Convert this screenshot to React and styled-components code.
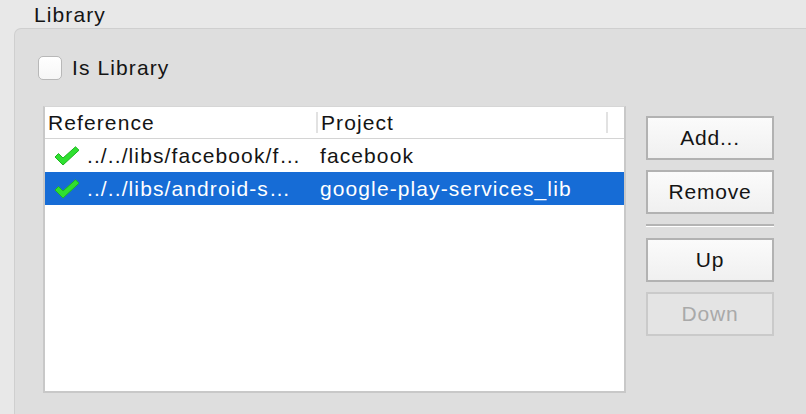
import React from "react";
import styled, { createGlobalStyle } from "styled-components";

const textDark = "#141414";
const selection = "#166cd6";
const sansFamily = `"Liberation Sans", Arial, sans-serif`;

const GlobalStyle = createGlobalStyle`
  html, body {
    margin: 0;
    padding: 0;
    background: #e8e8e8;
    font-family: ${sansFamily};
    overflow: hidden;
  }
`;

const rows = [
  { reference: "../../libs/facebook/f\u2026", project: "facebook" },
  { reference: "../../libs/android-s\u2026", project: "google-play-services_lib", selected: true }
];

const CheckMark = () => (
  <svg width="26" height="20" viewBox="0 0 26 20">
    <path
      d="M1 11 L4.5 7.5 L9 12 L21.5 0.8 L25 4.2 L9 19 Z"
      fill="#2fe030"
      stroke="#1fb522"
      strokeWidth="1"
      strokeLinejoin="round"
    />
  </svg>
);

export default function App() {
  return (
    <Page>
      <GlobalStyle />
      <Title>Library</Title>
      <GroupBox>
        <CheckboxRow>
          <Checkbox />
          <Label>Is Library</Label>
        </CheckboxRow>

        <Content>
          <Table>
            <HeaderRow>
              <HeaderCell width={268}>Reference</HeaderCell>
              <HeaderCell width={285}>Project</HeaderCell>
            </HeaderRow>
            {rows.map((row) => (
              <Row key={row.project} selected={row.selected}>
                <RefCell>
                  <CheckMark />
                  <span>{row.reference}</span>
                </RefCell>
                <ProjectCell>{row.project}</ProjectCell>
              </Row>
            ))}
          </Table>

          <Buttons>
            <Button>Add...</Button>
            <Button>Remove</Button>
            <Separator />
            <Button>Up</Button>
            <Button disabled>Down</Button>
          </Buttons>
        </Content>
      </GroupBox>
    </Page>
  );
}

const Page = styled.div`
  width: 806px;
  height: 414px;
  display: flex;
  flex-direction: column;
  color: ${textDark};
  font-size: 21px;
  letter-spacing: 1.1px;
`;

const Title = styled.div`
  height: 28px;
  padding-left: 34px;
  line-height: 29px;
`;

const GroupBox = styled.div`
  flex: 1;
  margin-left: 14px;
  margin-right: -10px;
  background: #dedede;
  border: 1px solid #cfcfcf;
  border-bottom: none;
  border-radius: 7px 7px 0 0;
  padding: 27px 0 0 28px;
  display: flex;
  flex-direction: column;
`;

const CheckboxRow = styled.div`
  display: flex;
  align-items: center;
  gap: 10px;
  margin-left: -5px;
  height: 24px;
`;

const Checkbox = styled.span`
  width: 22px;
  height: 22px;
  border-radius: 5px;
  border: 1px solid #b8b8b8;
  background: linear-gradient(#ffffff, #f6f6f6);
`;

const Label = styled.span`
  line-height: 24px;
`;

const Content = styled.div`
  display: flex;
  align-items: flex-start;
  gap: 20px;
  margin-top: 26px;
`;

const Table = styled.div`
  width: 579px;
  height: 284px;
  background: #ffffff;
  border: 2px solid #c8c8c8;
  border-top: 1px solid #d6d6d6;
  display: flex;
  flex-direction: column;
`;

const HeaderRow = styled.div`
  display: flex;
  height: 31px;
  border-bottom: 1px solid #d4d4d4;
`;

const HeaderCell = styled.div`
  width: ${({ width }) => width}px;
  padding-left: 3px;
  line-height: 32px;
  border-right: 2px solid transparent;
  position: relative;

  &::after {
    content: "";
    position: absolute;
    right: -2px;
    top: 5px;
    height: 21px;
    width: 2px;
    background: #e2e2e2;
  }
`;

const Row = styled.div`
  display: flex;
  height: 33px;
  align-items: center;
  background: ${({ selected }) => (selected ? selection : "transparent")};
  color: ${({ selected }) => (selected ? "#ffffff" : textDark)};
`;

const RefCell = styled.div`
  width: 266px;
  padding-left: 9px;
  display: flex;
  align-items: center;
  gap: 7px;
  white-space: nowrap;
  overflow: hidden;
`;

const ProjectCell = styled.div`
  white-space: nowrap;
`;

const Buttons = styled.div`
  width: 128px;
  margin-top: 10px;
  display: flex;
  flex-direction: column;
  gap: 10px;
`;

const Button = styled.button`
  height: 44px;
  width: 128px;
  box-sizing: border-box;
  border: 2px solid ${({ disabled }) => (disabled ? "#cacaca" : "#b2b2b2")};
  background: ${({ disabled }) =>
    disabled ? "#e4e4e4" : "linear-gradient(#fbfbfb, #f0f0f0)"};
  color: ${({ disabled }) => (disabled ? "#a9a9a9" : textDark)};
  font-family: ${sansFamily};
  font-size: 21px;
  letter-spacing: 0.8px;
  padding: 0;
`;

const Separator = styled.div`
  height: 2px;
  border-bottom: 1px solid #ffffff;
  background: #b4b4b4;
  margin: 0 0 1px;
`;
